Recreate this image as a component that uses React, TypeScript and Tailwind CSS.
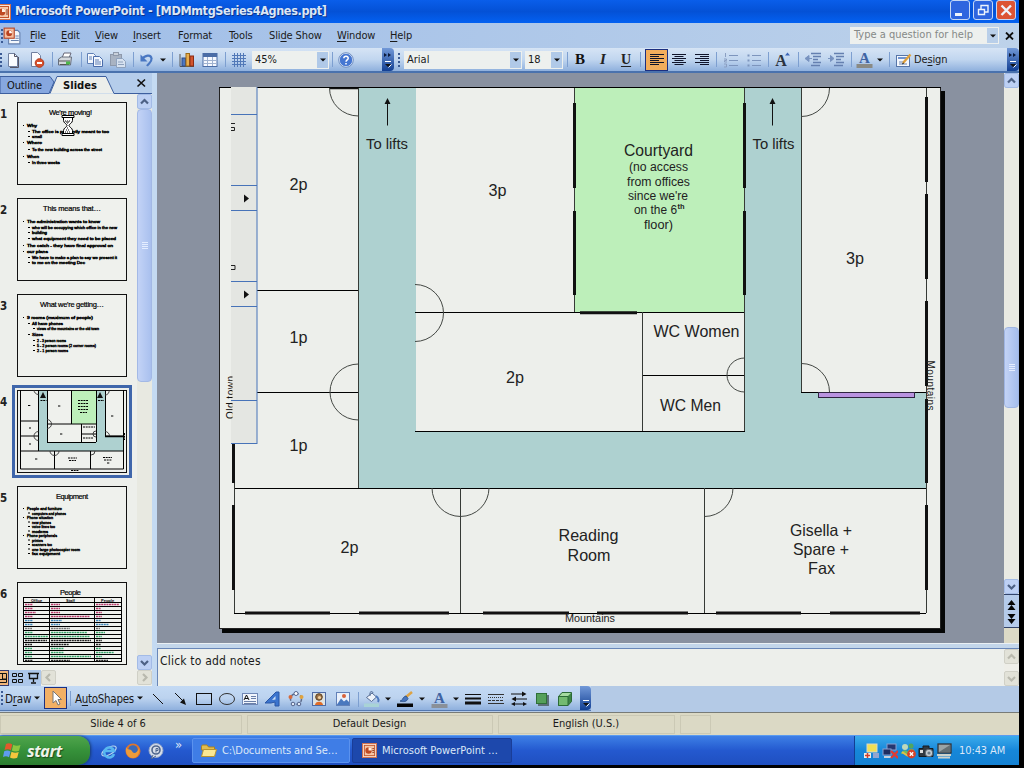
import React from "react";

type Kids = { children?: React.ReactNode };

function Cell({ w, children }: Kids & { w: string }) {
  return <div className={`flex h-full shrink-0 items-center justify-center ${w}`}>{children}</div>;
}

function Ico({ s = 16, children }: Kids & { s?: number }) {
  return (
    <svg width={s} height={s} viewBox="0 0 16 16" className="block shrink-0" fill="none">
      {children}
    </svg>
  );
}

function Sep({ w }: { w: string }) {
  return (
    <Cell w={w}>
      <div className="h-[15px] w-px bg-[#7d9fd0]" />
    </Cell>
  );
}

function Down({ c = "#111" }: { c?: string }) {
  return (
    <svg width="6" height="4" viewBox="0 0 6 4" className="block shrink-0">
      <path d="M0 0.5H6L3 3.5Z" fill={c} />
    </svg>
  );
}

function Grip() {
  return (
    <div className="flex flex-col gap-[2px]">
      {[0, 1, 2, 3].map((i) => (
        <div key={i} className="h-[2px] w-[2px] bg-[#3a5a94]" />
      ))}
    </div>
  );
}

function Overflow({ arrows = true }: { arrows?: boolean }) {
  return (
    <div className="flex h-full w-full flex-col items-center justify-between rounded-r-sm bg-linear-to-b from-[#7299d8] to-[#123f93] pt-[5px] pb-[3px]">
      <svg width="8" height="4" viewBox="0 0 8 4">
        {arrows && <path d="M0 0L3 2L0 4ZM4 0L7 2L4 4Z" fill="#0c1a3a" />}
      </svg>
      <svg width="8" height="7" viewBox="0 0 8 7">
        <path d="M1 0.5H7" stroke="#fff" />
        <path d="M1 3H7L4 6Z" fill="#111" />
        <path d="M4.5 6.5L7.5 3.5" stroke="#fff" />
      </svg>
    </div>
  );
}

function Combo({ w, text }: { w: string; text: string }) {
  return (
    <div className={`flex h-[18px] shrink-0 items-stretch bg-[#edf0ee] p-px ${w}`}>
      <span className="flex-1 pl-[2px] leading-[15px]">{text}</span>
      <span className="flex w-[11px] items-center justify-center bg-[#b0c9e8]">
        <Down />
      </span>
    </div>
  );
}

function Bars({ x }: { x: number[] }) {
  return (
    <Ico>
      {x.map((v, i) => (
        <path key={i} d={`M${v} ${2.5 + i * 2}h${i % 2 ? 9 : 14}`} stroke="#10142a" />
      ))}
    </Ico>
  );
}

function Chevron({ dir, off }: { dir: "up" | "down" | "left" | "right"; off?: boolean }) {
  const d = {
    up: "M4 9.5L7.5 6L11 9.5",
    down: "M4 6L7.5 9.5L11 6",
    left: "M9 4L5.5 7.5L9 11",
    right: "M6 4L9.5 7.5L6 11",
  }[dir];
  return (
    <svg width="15" height="15" viewBox="0 0 15 15" className="block shrink-0">
      <rect x="0.5" y="0.5" width="14" height="14" rx="1.5" fill={off ? "#e2e2d8" : "#bdd0f4"} stroke={off ? "#d0d0c6" : "#a3bbe6"} />
      <path d={d} stroke={off ? "#b9b9ae" : "#4d6185"} strokeWidth="2.2" fill="none" />
    </svg>
  );
}

function PptIcon({ s = 16 }: { s?: number }) {
  return (
    <Ico s={s}>
      <rect x="0.5" y="0.5" width="15" height="15" fill="#fbe3d2" stroke="#d4714a" />
      <rect x="2.5" y="2.5" width="11" height="11" fill="#f6c7a8" stroke="#c2542c" />
      <circle cx="7" cy="8" r="3.4" fill="#c04a22" />
      <path d="M7 8V4.6A3.4 3.4 0 0 1 10.4 8Z" fill="#fff0e0" />
      <path d="M11 6h2M11 8h2M11 10h2" stroke="#8c3b20" />
    </Ico>
  );
}

function MenuBar() {
  const items: [string, string, string, string][] = [
    ["w-[31px]", "", "F", "ile"],
    ["w-[34px]", "", "E", "dit"],
    ["w-[38px]", "", "V", "iew"],
    ["w-[45px]", "", "I", "nsert"],
    ["w-[51px]", "F", "o", "rmat"],
    ["w-[40px]", "", "T", "ools"],
    ["w-[68px]", "Sli", "d", "e Show"],
    ["w-[53px]", "", "W", "indow"],
    ["w-[40px]", "", "H", "elp"],
  ];
  return (
    <div className="flex h-[25px] shrink-0 items-center bg-linear-to-r from-[#9fbde8] to-[#bdd2ea]">
      <Cell w="w-[3px]"><Grip /></Cell>
      <div className="flex w-[27px]">
        <Ico s={18}>
          <path d="M5 3h8l2 2v10H5Z" fill="#f4f7fc" stroke="#6580ad" />
          <path d="M11 8h3M11 10h3M7 12h7" stroke="#6580ad" />
          <rect x="1" y="1" width="9" height="9" fill="#f5bd9d" stroke="#b7492a" />
          <circle cx="5.5" cy="5.5" r="2.6" fill="#b7401e" />
          <path d="M5.500 5.500V3A2.600 2.600 0 0 1 8 5.500Z" fill="#fff" />
        </Ico>
      </div>
      {items.map(([w, a, b, c]) => (
        <span key={b + c} className={`shrink-0 pt-px tracking-[-0.120px] ${w}`}>
          {a}<span className="underline underline-offset-2">{b}</span>{c}
        </span>
      ))}
      <div className="flex-1" />
      <div className="flex h-[17px] w-[149px] items-stretch bg-[#edf0ee] p-px">
        <span className="flex-1 pl-[3px] text-[11px] leading-[14px] whitespace-nowrap text-[#858987]">Type a question for help</span>
        <span className="flex w-[11px] items-center justify-center bg-[#b9cfe9]"><Down /></span>
      </div>
      <Cell w="w-[20px]">
        <svg width="9" height="8" viewBox="0 0 9 8"><path d="M1 0.500L8 7.500M8 0.500L1 7.500" stroke="#111" strokeWidth="1.800" /></svg>
      </Cell>
    </div>
  );
}

function FontA({ bar, s = 17 }: { bar: string; s?: number }) {
  return (
    <svg width={s} height="17" viewBox="0 0 17 17" className="block shrink-0">
      <text x="8.500" y="11.500" textAnchor="middle" fontFamily="Liberation Serif, serif" fontWeight="bold" fontSize="15" fill="#3f64a3">A</text>
      <rect x="0.500" y="13" width="16" height="4" fill={bar} />
    </svg>
  );
}

function Toolbar() {
  return (
    <div className="flex h-[25px] shrink-0 items-center border-b-2 border-[#4a72ad] bg-linear-to-b from-[#d6e4f5] via-[#c1d6ef] to-[#8fb0dd]">
      <Cell w="w-[2px]"><Grip /></Cell>
      <Cell w="w-[22px]"><Ico><path d="M3.500 1.500h6l3 3v10h-9Z" fill="#fafcff" stroke="#7080a0" /><path d="M9.500 1.500v3h3M5 15.500h8.500V5" stroke="#556" /></Ico></Cell>
      <Cell w="w-[26px]"><Ico><path d="M2.500 0.500h6l3 3v11h-9Z" fill="#fafcff" stroke="#7080a0" /><circle cx="10.500" cy="11" r="4.300" fill="#d8502c" stroke="#b23a1c" /><path d="M8 11h5" stroke="#fff" strokeWidth="2" /></Ico></Cell>
      <Sep w="w-[4px]" />
      <Cell w="w-[22px]"><Ico><path d="M5 6L7 1h7l-2 5" fill="#fff" stroke="#667" /><path d="M1.500 7l3-2h10l-1 8h-12Z" fill="#d5d9dd" stroke="#666e7c" /><path d="M2 9h11M3 12.500h9" stroke="#555" /><rect x="9" y="9.500" width="4" height="3" fill="#4cb848" /></Ico></Cell>
      <Sep w="w-[10px]" />
      <Cell w="w-[18px]"><Ico><path d="M0.500 1.500h6l2 2v8h-8Z" fill="#f4f8fe" stroke="#5f7fb5" /><path d="M6.500 4.500h6l3 3v7h-9Z" fill="#f4f8fe" stroke="#4a6cab" /><path d="M2 5h3M2 7h3M8 8h4M8 10h6M8 12h6" stroke="#5f7fb5" /></Ico></Cell>
      <Cell w="w-[28px]"><Ico><rect x="0.500" y="2.500" width="11" height="11" fill="#a9b3c2" stroke="#8e99ab" /><rect x="3.500" y="0.500" width="5" height="3" fill="#c9d0da" stroke="#8e99ab" /><path d="M6.500 6.500h6l3 3v6h-9Z" fill="#d7e2f0" stroke="#8fa2bd" /><path d="M8 10h5M8 12.500h6" stroke="#8fa2bd" /></Ico></Cell>
      <Sep w="w-[2px]" />
      <Cell w="w-[26px]"><Ico><path d="M3 7C6 3 12 2 12.500 6.500C13 10 10 11 8 14" stroke="#4977c2" strokeWidth="2.200" /><path d="M1.500 2.500V9.500H8.500Z" fill="#4977c2" /></Ico></Cell>
      <Cell w="w-[6px]"><Down /></Cell>
      <Sep w="w-[12px]" />
      <Cell w="w-[18px]"><Ico><path d="M1 2v12.500h14" stroke="#555" /><rect x="3" y="6" width="3.500" height="8" fill="#4c76c0" stroke="#2c4c88" /><rect x="7" y="1.500" width="3.500" height="12.500" fill="#e8ae4e" stroke="#9b6a18" /><rect x="11" y="4" width="3.500" height="10" fill="#d2552f" stroke="#8c2c14" /></Ico></Cell>
      <Cell w="w-[28px]"><Ico><rect x="1" y="1.500" width="14" height="13" fill="#f6f9ff" stroke="#4b6da6" /><rect x="1" y="1.500" width="14" height="3.500" fill="#4b6da6" /><path d="M1 8.500h14M1 11.500h14M5.500 5v9M10.500 5v9" stroke="#9fb2d0" /></Ico></Cell>
      <Sep w="w-[2px]" />
      <Cell w="w-[26px]"><Ico><path d="M1 3.500h14M1 6.500h14M1 9.500h14M1 12.500h14M3.500 1v14M6.500 1v14M9.500 1v14M12.500 1v14" stroke="#5279b8" /></Ico></Cell>
      <Combo w="w-[77px]" text="45%" />
      <Sep w="w-[6px]" />
      <Cell w="w-[22px]"><Ico><circle cx="8" cy="8" r="6.700" fill="#4677d2" stroke="#dce8fa" /><circle cx="8" cy="8" r="7.300" stroke="#7391c2" /><path d="M5.800 6.200C6 3.500 10.500 3.800 10.200 6.300C10 7.800 8 8 8 9.800M8 11v1.600" stroke="#fff" strokeWidth="1.500" /></Ico></Cell>
      <div className="w-[25px]" />
      <Cell w="w-[12px]"><Overflow /></Cell>
      <Cell w="w-[10px]"><Grip /></Cell>
      <Combo w="w-[118px]" text="Arial" />
      <div className="w-[3px]" />
      <Combo w="w-[38px]" text="18" />
      <Sep w="w-[8px]" />
      <Cell w="w-[18px]"><b className="font-['Liberation_Serif',serif] text-[15px] text-[#111]">B</b></Cell>
      <Cell w="w-[28px]"><b className="font-['Liberation_Serif',serif] text-[15px] text-[#222] italic">I</b></Cell>
      <Cell w="w-[18px]"><b className="font-['Liberation_Serif',serif] text-[14px] text-[#222] underline underline-offset-2">U</b></Cell>
      <Sep w="w-[10px]" />
      <div className="flex h-[22px] w-[23px] shrink-0 items-center justify-center border border-[#1c2f80] bg-[#f2ad5c]"><Bars x={[1, 1, 1, 1, 1, 1]} /></div>
      <Cell w="w-[22px]"><Bars x={[1, 3.5, 1, 3.5, 1, 3.5]} /></Cell>
      <Cell w="w-[24px]"><Bars x={[1, 6, 1, 6, 1, 6]} /></Cell>
      <Sep w="w-[4px]" />
      <Cell w="w-[26px]"><Ico><path d="M6 3.500h9M6 8.500h9M6 13.500h9" stroke="#7d95bd" /><path d="M2.500 1v4M1 7h2.500v1.500H1.500V10H4M1 12h2.500v3H1" stroke="#8b9fc2" /></Ico></Cell>
      <Cell w="w-[20px]"><Ico><path d="M6 3.500h9M6 8.500h9M6 13.500h9" stroke="#7d95bd" /><path d="M1.500 3.500h2M1.500 8.500h2M1.500 13.500h2" stroke="#7d95bd" strokeWidth="2" /></Ico></Cell>
      <Sep w="w-[8px]" />
      <Cell w="w-[20px]"><svg width="17" height="17" viewBox="0 0 17 17"><text x="7" y="15" textAnchor="middle" fontFamily="Liberation Serif, serif" fontWeight="bold" fontSize="16" fill="#2b3340">A</text><path d="M11 4.500L13.500 1.500L16 4.500Z" fill="#3c66b8" /></svg></Cell>
      <Sep w="w-[12px]" />
      <Cell w="w-[18px]"><Ico><path d="M6 1.500h10M8 4.500h8M8 7.500h5M8 10.500h8M6 13.500h9" stroke="#6580b0" strokeWidth="1.300" /><path d="M0 6.500L4 3.500V9.500ZM4 6.500h3" fill="#7893c0" stroke="#7893c0" /></Ico></Cell>
      <Cell w="w-[28px]"><Ico><path d="M6 1.500h10M8 4.500h8M8 7.500h5M8 10.500h8M6 13.500h9" stroke="#6580b0" strokeWidth="1.300" /><path d="M6 6.500L2.500 3.500V9.500ZM0 6.500h3" fill="#7893c0" stroke="#7893c0" /></Ico></Cell>
      <Sep w="w-[2px]" />
      <Cell w="w-[24px]"><FontA bar="#8a8a84" /></Cell>
      <Cell w="w-[8px]"><Down /></Cell>
      <Sep w="w-[10px]" />
      <Cell w="w-[20px]"><Ico><rect x="0.500" y="3.500" width="13" height="11" fill="#f5f8fd" stroke="#5675a8" /><rect x="2" y="5" width="9" height="2" fill="#6f93d0" /><path d="M3 10h5M3 12h8" stroke="#6b85b0" /><path d="M7 11L14.500 2.500" stroke="#dfa03a" strokeWidth="2.400" /><path d="M6 12l2-1" stroke="#333" /></Ico></Cell>
      <span className="pt-px text-[11px] tracking-[-0.150px]">De<span className="underline underline-offset-2">s</span>ign</span>
      <div className="flex-1" />
      <Cell w="w-[12px]"><Overflow /></Cell>
    </div>
  );
}

type Line = [number, number, number, string];

function SlideText({ title, tx, tw, lines }: { title: string; tx: number; tw: number; lines: Line[] }) {
  return (
    <g fontFamily="Liberation Sans, Arial, sans-serif" fill="#000">
      <text x={tx} y="13" fontSize="7.500" textLength={tw} stroke="#000" strokeWidth="0.200">{title}</text>
      {lines.map(([x, y, w, t], i) => (
        <g key={i}>
          <rect x={x - 4} y={y - 2} width={x < 12 ? 1 : 2} height="1" />
          <text x={x} y={y} fontSize="4.200" stroke="#000" strokeWidth="0.450" textLength={w} lengthAdjust="spacingAndGlyphs">{t}</text>
        </g>
      ))}
    </g>
  );
}

function PeopleTable() {
  const c = ["#b93a6c", "#b93a6c", "#b93a6c", "#b93a6c", "#3e86b8", "#3e86b8", "#777", "#35a56a", "#35a56a", "#222", "#222", "#35a56a", "#35a56a", "#35a56a", "#222"];
  const w = [[8, 9, 23], [8, 9, 5], [11, 9, 6], [8, 39, 6], [8, 11, 5], [8, 9, 13], [7, 19, 4], [8, 36, 9], [23, 39, 6], [22, 40, 6], [7, 18, 5], [7, 13, 5], [7, 13, 18], [7, 40, 6], [8, 19, 12]];
  return (
    <g>
      <text x="43" y="13" fontSize="7.500" textLength="21" fontFamily="Liberation Sans, sans-serif" stroke="#000" strokeWidth="0.200">People</text>
      <g fontFamily="Liberation Sans, sans-serif" fontSize="4" fontWeight="bold">
        <text x="14" y="19.500">Office</text><text x="49" y="19.500">Staff</text><text x="84" y="19.500">People</text>
      </g>
      <rect x="6.500" y="15.500" width="98" height="64" fill="none" stroke="#000" />
      <path d="M32.500 15v65M77.500 15v65" stroke="#000" />
      {c.map((k, i) => (
        <g key={i}>
          <path d={`M6 ${20.5 + i * 4}h98`} stroke="#000" />
          <path d={`M8 ${22.6 + i * 4}h${w[i][0]}M34 ${22.6 + i * 4}h${w[i][1]}M79 ${22.6 + i * 4}h${w[i][2]}`} stroke={k} strokeWidth="1.500" strokeDasharray="2 0.6" />
        </g>
      ))}
    </g>
  );
}

function MiniPlan() {
  return (
    <g stroke="#000" fill="none">
      <path d="M21.500 1H30v52h49V1h9v45h18v15H21.500Z" fill="#aed1d0" stroke="none" />
      <rect x="54" y="1" width="26" height="33" fill="#bdefba" stroke="none" />
      <path d="M3.500 0v79h103V0M3 31h18M3 46h18M3 61h103M21.500 0v61M37.500 61v18M73.500 61v18M30 34h49M30 52.500h49M30.500 0v52M54.500 0v34M79.500 0v52M64.500 34v18M64 44h15M88.500 0v46h18" />
      <path d="M88 46.500h18" strokeWidth="1.500" />
      <path d="M17 0a4.500 4.500 0 0 0 4.500 4.500M21.500 41.500a4.500 4.500 0 0 0 0 9M30 29.500a4.500 4.500 0 0 1 0 9M33 61a4.500 4.500 0 0 0 9 0M88 41.500a4.500 4.500 0 0 1 4.500 4.500M92 0a4 4 0 0 1-4 5M79 41a3 3 0 0 0 0 6M78 61a4 4 0 0 1-4 4" stroke="#333" strokeWidth="0.900" />
      <path d="M26 2L29 8H23ZM83 2L86 8H80Z" fill="#111" stroke="none" />
      <path d="M23.500 10.500h6M81 10.500h6M11 15.500h3M41 16h3M12 38h2M12 54h2M18 69h3M43 44h3M94 26h3M61 10.500h10M61 13.500h10M61 16.500h10M61 19.500h10M63 22.500h7M66 37h12M66 48h10M51 68h9M52 70.500h7M86 67.500h9M87 70h8M90 73h3M54 80.500h8M107.500 43v7" strokeDasharray="2 0.700" />
    </g>
  );
}

const thumbs: React.ReactNode[] = [
  <SlideText title="We're moving!" tx={32} tw={43} lines={[[10, 25, 10, "Why"], [15, 31, 77, "The office is presently meant to too"], [15, 36, 10, "small"], [10, 42, 15, "Where"], [15, 49, 70, "To the new building across the street"], [10, 56, 12, "When"], [15, 62, 28, "In three weeks"]]} />,
  <SlideText title="This means that…" tx={26} tw={58} lines={[[10, 25, 73, "The administration wants to know"], [15, 31, 85, "who will be occupying which office in the new"], [15, 36, 15, "building"], [15, 42, 84, "what equipment they need to be placed"], [10, 49, 86, "The catch - they have final approval on"], [10, 55, 21, "our plans"], [15, 61, 85, "We have to make a plan to say we present it"], [15, 66, 53, "to me on the meeting Dec"]]} />,
  <SlideText title="What we're getting…" tx={23} tw={64} lines={[[10, 25, 66, "9 rooms (maximum of people)"], [15, 31, 31, "All have phones"], [20, 36, 62, "views of the mountains or the old town"], [15, 42, 11, "Sizes"], [20, 48, 29, "2 - 3 person rooms"], [20, 53, 59, "5 - 2 person rooms (2 corner rooms)"], [20, 58, 31, "2 - 1 person rooms"]]} />,
  <MiniPlan />,
  <SlideText title="Equipment" tx={39} tw={32} lines={[[10, 24, 35, "People and furniture"], [15, 28.500, 34, "computers and phones"], [10, 33, 26, "Phone situation"], [15, 37.500, 19, "new phones"], [15, 42, 23, "voice lines too"], [15, 46.500, 16, "modems"], [10, 51, 30, "Phone peripherals"], [15, 55.500, 11, "printers"], [15, 60, 20, "scanners too"], [15, 64.500, 48, "one large photocopier room"], [15, 69, 28, "fax equipment"]]} />,
  <PeopleTable />,
];

function SidePane() {
  return (
    <div className="relative flex w-[157px] shrink-0 flex-col bg-[#edefeb]">
      <div className="flex h-[21px] shrink-0 bg-[#b5cdeb]">
        <svg width="157" height="21" viewBox="0 0 157 21" className="block">
          <path d="M0 20.500V3.500H50L54 9L49 20.500Z" fill="#86a7df" stroke="#3d5f9f" />
          <path d="M50 20.500L57 3.500H106L114 20.500" fill="#edefeb" stroke="#3d5f9f" />
          <path d="M114 20.500H152" stroke="#3d5f9f" />
          <text x="7" y="16" fontFamily="DejaVu Sans Condensed, DejaVu Sans, sans-serif" fontSize="11" textLength="35" fill="#111">Outline</text>
          <text x="63" y="16" fontFamily="DejaVu Sans Condensed, DejaVu Sans, sans-serif" fontSize="11" fontWeight="bold" textLength="34" lengthAdjust="spacingAndGlyphs" fill="#111">Slides</text>
          <path d="M137.500 6.500L145 13.500M145 6.500L137.500 13.500" stroke="#111" strokeWidth="1.600" />
          <rect x="152" y="0" width="5" height="21" fill="#c4daf2" />
        </svg>
      </div>
      <div className="flex h-[576px] shrink-0">
        <div className="flex w-[137px] flex-col gap-[13px] pt-[8px]">
          {thumbs.map((t, i) => (
            <div key={i} className="flex h-[83px] shrink-0">
              <span className="w-[17px] pt-[6px] text-[11.500px] leading-[13px] font-semibold text-[#222]">{i + 1}</span>
              <div className={i === 3 ? "h-[83px] w-[110px] outline-3 outline-offset-2 outline-[#3f66ab]" : "h-[83px] w-[110px]"}>
                <svg width="110" height="83" viewBox="0 0 110 83" className="block">
                  <rect x="0.500" y="0.500" width="109" height="82" fill="#eff1ed" stroke="#111" />
                  {t}
                </svg>
              </div>
            </div>
          ))}
        </div>
        <div className="flex w-[15px] flex-col bg-[#e8e9e1]">
          <Chevron dir="up" />
          <div className="flex h-[273px] flex-col items-center justify-center gap-px rounded-sm border border-[#a3b9e6] bg-linear-to-r from-[#c3d3f6] to-[#a9c0ee]">
            {[0, 1, 2, 3].map((i) => <div key={i} className="h-px w-[6px] bg-[#e4edff]" />)}
          </div>
          <div className="flex-1" />
          <Chevron dir="down" />
        </div>
        <div className="w-[5px] bg-[#c4daf2]" />
      </div>
      <div className="flex h-[16px] shrink-0">
        <div className="flex w-[41px] bg-[#adc7ea]">
          <svg width="41" height="16" viewBox="0 0 41 16" fill="none" stroke="#111">
            <rect x="-2" y="0.500" width="10.500" height="15" fill="#f0b478" stroke="#33386e" />
            <path d="M0 3.500h6.500v9H0M2.500 4v5H6M0 9.500h6" />
            <path d="M12.500 3.500h4v3h-4ZM18.500 3.500h4v3h-4ZM12.500 9.500h4v3h-4ZM18.500 9.500h4v3h-4Z" />
            <path d="M28 3.500h11M29.500 4v4.500h8V4M33.500 9v3M31 13h5" strokeWidth="1.300" />
          </svg>
        </div>
        <Chevron dir="left" off />
        <div className="flex-1 bg-[#eeeee8]" />
        <Chevron dir="right" off />
        <div className="w-[5px] bg-[#c4daf2]" />
      </div>
      <div className="absolute top-[41px] left-[61px]">
        <svg width="14" height="23" viewBox="0 0 14 23" className="block">
          <path d="M2.500 3.500v3C2.500 9 6 10 6 11.500C6 13 2.500 14 2.500 16.500v3h9v-3C11.500 14 8 13 8 11.500C8 10 11.500 9 11.500 6.500v-3Z" fill="#fff" stroke="#000" />
          <path d="M1 1.500h12v2H1ZM1 19.500h12v2H1Z" fill="#fff" stroke="#000" />
          <path d="M4 7h1M6 7h1M8 7h1M5 8h1M7 8h1M6 9h1M6 14h1M5 16h1M7 16h1M4 18h1M6 18h1M8 18h1" stroke="#000" strokeWidth="1.200" />
        </svg>
      </div>
    </div>
  );
}

function FloorPlan() {
  const t = (x: number, y: number, w: number, s: string, f = 16.5) => (
    <text x={x} y={y} fontSize={f} textLength={w} lengthAdjust="spacingAndGlyphs">{s}</text>
  );
  return (
    <svg width="847" height="570" viewBox="157 73 847 570" className="block shrink-0 bg-[#8991a0]">
      <rect x="222" y="91" width="723" height="542" fill="#050606" />
      <rect x="219.500" y="87.500" width="721" height="541" fill="#edefeb" stroke="#222" />
      <path d="M359 88H416V431H745V88H801V392H926V488H359Z" fill="#aed1d0" />
      <rect x="575" y="88" width="170" height="224" fill="#bdefba" />
      <g stroke="#111" fill="none">
        <path d="M219 87.500H941M257 290.500H358M257 392.500H358M234 488.500H926M234 613.500H926M415 312.500H745M642 375.500H745M415 431.500H745M801 392.500H927" stroke="#000" />
        <path d="M358.500 88V488M234.500 443V613M460.500 488V613M704.500 488V613M642.500 312V431M574.500 88V312M744.500 88V431M801.500 88V392M926.500 88V613" stroke="#363a36" />
        <path d="M574.500 103V188M574.500 211V295M744.500 103V188M744.500 211V295M580 312.800H637M926.500 97V182M926.500 194V279M926.500 301V386M926.500 399V483M926.500 505V590M233.500 443V483M233.500 505V590M245 613H330M359 613H449M483 613H569M597 613H688M716 613H801M830 613H920" strokeWidth="3" />
        <path d="M330 88.500H358" strokeWidth="1.500" />
        <path d="M329.500 88A29 28 0 0 0 358.500 116M358.500 364A28.500 28 0 0 0 358.500 420M415 284.500A28.500 28.500 0 0 1 415 341.500M432 488A28.500 28.500 0 0 0 489 488M733 488A28.500 28.500 0 0 1 704.500 516.500M829.500 88A28 28.500 0 0 1 801.500 116.500M801.500 363.500A28 28.500 0 0 1 829.500 392M744.500 358A17.500 17 0 0 0 744.500 392" stroke="#444844" />
        <rect x="818.500" y="392.500" width="96" height="5" fill="#b993e0" stroke="#2e2440" />
        <path d="M387.500 103V125.500M772.500 103V125.500" />
        <path d="M387.500 98L390.500 104H384.500ZM772.500 98L775.500 104H769.500Z" fill="#111" stroke="none" />
      </g>
      <g fontFamily="Liberation Sans, Arial, sans-serif" fill="#222">
        {t(289.500, 190, 18, "2p")}
        {t(289.500, 343, 18, "1p")}
        {t(289.500, 451, 18, "1p")}
        {t(488.500, 196, 18, "3p")}
        {t(506, 383, 18, "2p")}
        {t(340.500, 553, 18, "2p")}
        {t(846, 264, 18, "3p")}
        {t(366, 149, 42, "To lifts", 14)}
        {t(752.500, 149, 42, "To lifts", 14)}
        {t(624, 156, 69, "Courtyard")}
        {t(629, 171, 59, "(no access", 12)}
        {t(627, 186, 63, "from offices", 12)}
        {t(628, 200, 60, "since we're", 12)}
        {t(634, 214, 43, "on the 6", 12)}
        <text x="677.500" y="209" fontSize="7.500" fontWeight="bold" textLength="7">th</text>
        {t(644, 229, 29, "floor)", 12)}
        {t(653.500, 337, 86, "WC Women")}
        {t(660, 411, 61, "WC Men")}
        {t(558.500, 541, 60, "Reading")}
        {t(567.500, 561, 43, "Room")}
        {t(790, 536, 62, "Gisella +")}
        {t(793, 555, 56, "Spare +")}
        {t(808, 574, 27, "Fax")}
        {t(565, 622, 50, "Mountains", 10)}
        <text transform="translate(926.500 360.500) rotate(90)" fontSize="10" textLength="50">Mountains</text>
      </g>
      <rect x="231" y="87" width="26" height="356" fill="#e4e6e2" />
      <path d="M231 114.500h26M231 185.500h26M231 210.500h26M231 281.500h26M231 306.500h26M231 400.500h26M231 443.500h26.500M257 87V443" stroke="#4773b8" fill="none" />
      <path d="M244 194.500L249 198.500L244 202.500ZM244 290.500L249 294.500L244 298.500Z" fill="#111" />
      <path d="M231 123.500h4M231 127.500h3.500v3H231M231 265.500h4v4h-4" stroke="#222" fill="none" />
      <clipPath id="edge"><rect x="220" y="370" width="12.500" height="60" /></clipPath>
      <g clipPath="url(#edge)">
        <text transform="translate(234 419) rotate(-90)" fontFamily="Liberation Sans, sans-serif" fontSize="10" textLength="43" fill="#111">Old town</text>
      </g>
    </svg>
  );
}

function SlideScroll() {
  return (
    <div className="flex w-[15px] flex-col bg-[#e9eae3]">
      <Chevron dir="up" />
      <div className="h-[239px]" />
      <div className="flex h-[81px] flex-col items-center justify-center gap-px rounded-sm border border-[#9fb5e2] bg-linear-to-r from-[#c3d3f6] to-[#a5bdec]">
        {[0, 1, 2, 3].map((i) => <div key={i} className="h-px w-[6px] bg-[#e4edff]" />)}
      </div>
      <div className="flex-1" />
      <Chevron dir="down" />
      <div className="flex h-[34px] flex-col border-y border-[#33446a] bg-[#b5cbea]">
        <svg width="15" height="32" viewBox="0 0 15 32">
          <path d="M3.500 10L7.500 5L11.500 10ZM3.500 15L7.500 10L11.500 15ZM3.500 19H11.500L7.500 24ZM3.500 24H11.500L7.500 29Z" fill="#050505" />
        </svg>
      </div>
      <div className="h-[15px] bg-[#dcdac6]" />
    </div>
  );
}

function DrawBar() {
  return (
    <div className="flex h-[26px] shrink-0 bg-[#b4cae6] pb-px text-[11.500px]">
      <div className="flex h-[25px] w-[591px] items-center border-b border-[#5378b0] bg-linear-to-b from-[#c4daf4] via-[#bcd3ef] to-[#8fb0dd]">
        <Cell w="w-[4px]"><Grip /></Cell>
        <span className="w-[29px] pt-[3px] pl-px tracking-[-0.200px]">D<span className="underline underline-offset-2">r</span>aw</span>
        <Cell w="w-[7px]"><Down /></Cell>
        <div className="w-[4px]" />
        <div className="flex h-[22px] w-[23px] items-center justify-center border border-[#1c2f80] bg-[#f2b065]">
          <Ico><path d="M5 1V13L8 10.500L10 15L12 14L10 9.500H13.500Z" fill="#fff" stroke="#777" /></Ico>
        </div>
        <Sep w="w-[6px]" />
        <span className="w-[63px] pt-[3px] pl-[2px] tracking-[-0.300px]">A<span className="underline underline-offset-2">u</span>toShapes</span>
        <Cell w="w-[8px]"><Down /></Cell>
        <div className="flex h-full flex-1 items-center pt-[2px]">
          <Cell w="w-[28px]"><Ico><path d="M3 3L13 13" stroke="#111" /></Ico></Cell>
          <Cell w="w-[18px]"><Ico><path d="M2 2L10 10" stroke="#111" /><path d="M13 14L7 11.500L11 7.500Z" fill="#111" /></Ico></Cell>
          <Cell w="w-[28px]"><Ico><rect x="0.500" y="2.500" width="15" height="11" stroke="#111" /></Ico></Cell>
          <Cell w="w-[18px]"><Ico><ellipse cx="8" cy="8" rx="7.500" ry="5.500" stroke="#333" /></Ico></Cell>
          <Cell w="w-[28px]"><Ico><rect x="0.500" y="2.500" width="15" height="11" fill="#f1f5fc" stroke="#7088b5" /><path d="M2 9L4.500 4L7 9M3 7.500h3" stroke="#111" /><path d="M9 5.500h5M9 7.500h5M2 10.500h12M2 12.500h12" stroke="#6a7fa8" /></Ico></Cell>
          <Cell w="w-[18px]"><Ico><path d="M0 12L11 1L14 1V15H10V11L6 12Z" fill="#3b74ce" stroke="#2a56a5" /><path d="M7 9L10.500 5V8.500Z" fill="#cde0f8" /></Ico></Cell>
          <Cell w="w-[27px]"><Ico><circle cx="8" cy="8" r="5.500" stroke="#5d6c8c" strokeDasharray="3 2" strokeWidth="1.500" /><circle cx="8" cy="2.500" r="2" fill="#fff" stroke="#55648c" /><circle cx="2.500" cy="6" r="2" fill="#d66a3c" /><circle cx="13.500" cy="6" r="2" fill="#e0a33d" /><circle cx="5" cy="13" r="1.800" fill="#dfe8f5" stroke="#55648c" /><circle cx="11" cy="13" r="1.800" fill="#dfe8f5" stroke="#55648c" /></Ico></Cell>
          <Cell w="w-[20px]"><Ico><rect x="1.500" y="1.500" width="13" height="13" fill="#dfe3e2" stroke="#4d6ba5" /><circle cx="8" cy="6" r="3.300" fill="#9a7146" stroke="#5b4020" /><path d="M4 14C4 9.500 12 9.500 12 14Z" fill="#e06b26" /><circle cx="8.500" cy="6.500" r="1.600" fill="#f3cf9a" /></Ico></Cell>
          <Cell w="w-[28px]"><Ico><rect x="1.500" y="1.500" width="13" height="13" fill="#eaf1fb" stroke="#6281b8" /><path d="M2 13.500L6 7.500L9 10.500L11.500 8.500L14 11V14H2Z" fill="#4a78be" /><circle cx="9" cy="5" r="2" fill="#d9633a" /></Ico></Cell>
          <Sep w="w-[2px]" />
          <Cell w="w-[26px]"><Ico><path d="M2.500 6.500L8 2L12.500 6L7.500 10.500Z" fill="#eef3fa" stroke="#556c94" /><path d="M6 5V1.500C7 0 9 0.500 9 2" stroke="#556c94" /><path d="M12 5C15 7 15 9 14 11" stroke="#4d78bd" strokeWidth="2" /><rect x="0" y="12.500" width="15" height="3.500" fill="#a9d3d6" /></Ico></Cell>
          <Cell w="w-[6px]"><Down /></Cell>
          <Cell w="w-[28px]"><Ico><path d="M15 1L9 6" stroke="#dda344" strokeWidth="2.500" /><path d="M3 10C6 10 5 6 9 5L11 7.500C10 11 6 11 3 10Z" fill="#4674bd" stroke="#32588f" /><rect x="0" y="12.500" width="16" height="3.500" fill="#050505" /></Ico></Cell>
          <Cell w="w-[6px]"><Down /></Cell>
          <Cell w="w-[28px]"><FontA bar="#8a9098" /></Cell>
          <Cell w="w-[6px]"><Down /></Cell>
          <Cell w="w-[28px]"><Ico><path d="M0 3.500h16" stroke="#111" /><path d="M0 7.500h16" stroke="#111" strokeWidth="2" /><path d="M0 12h16" stroke="#111" strokeWidth="3" /></Ico></Cell>
          <Cell w="w-[18px]"><Ico><path d="M0 3.500h16M0 12.500h16" stroke="#333" /><path d="M0 6.500h16" stroke="#333" strokeDasharray="1 1" /><path d="M0 9.500h16" stroke="#333" strokeDasharray="3 1" /></Ico></Cell>
          <Cell w="w-[28px]"><Ico><path d="M0 3h14M2 8h14M2 13h12" stroke="#111" strokeWidth="1.200" /><path d="M11 0.500L15.500 3L11 5.500M5 5.500L0.500 8L5 10.500M4 11L0 13L4 15M12 11L16 13L12 15" fill="#111" /></Ico></Cell>
          <Cell w="w-[18px]"><Ico><rect x="4" y="4" width="11" height="11" fill="#5b6f79" /><rect x="2.500" y="2.500" width="10" height="10" fill="#55a05a" stroke="#2f7038" /></Ico></Cell>
          <Cell w="w-[28px]"><Ico><path d="M1.500 5.500L5 1.500H14.500V10.500L11 14.500H1.500Z" fill="#3d8545" stroke="#2b6a36" /><path d="M1.500 5.500H11V14.500H1.500Z" fill="#73ba70" stroke="#2b6a36" /><path d="M2.500 5L5.300 2H14L11 5Z" fill="#a5dba0" /></Ico></Cell>
        </div>
        <Cell w="w-[11px]"><Overflow arrows={false} /></Cell>
      </div>
    </div>
  );
}

function Status({ w, text, pad }: { w: string; text: string; pad: string }) {
  return (
    <div className={`flex h-[19px] shrink-0 items-center justify-center border border-[#cbc9b5] pt-px ${w} ${pad}`}>
      <span className="whitespace-nowrap">{text}</span>
    </div>
  );
}

function TaskBar() {
  return (
    <div className="flex h-[30px] shrink-0 items-center border-t border-[#5a9bf0] bg-linear-to-b from-[#3e7fe6] via-[#2459cf] to-[#1f4fc0] text-[#dce8f8]">
      <div className="flex h-full w-[90px] shrink-0 items-center gap-[5px] rounded-r-xl bg-linear-to-b from-[#4fa54c] via-[#36913a] to-[#2b7c2f] pl-[3px] shadow-[1px_0_3px_#173a6e]">
        <svg width="19" height="18" viewBox="0 0 19 18" className="shrink-0">
          <path d="M3 2C5 1 7 1 9.300 2.400L7.800 8.200C6 7 4 7 1.500 8Z" fill="#e2592c" />
          <path d="M10.300 2.800C12 4 15 4 17.500 3L16 8.800C13.500 10 11 9.500 8.800 8.500Z" fill="#8cc63f" />
          <path d="M1.200 9.200C3.500 8 5.500 8.200 7.500 9.400L6 15.200C4 14 2 14 0 15Z" fill="#5f9cf0" />
          <path d="M8.500 9.800C11 11 13.500 11 15.700 10L14.200 15.800C12 17 9 16.800 7 15.600Z" fill="#f4c63d" />
        </svg>
        <span className="font-['Noto_Sans','Open_Sans',sans-serif] text-[16px] leading-none font-bold tracking-[-0.400px] text-[#eef3e8] italic [font-stretch:normal] [text-shadow:1px_1px_1px_#1a4d1c]">start</span>
      </div>
      <div className="w-[11px]" />
      <Cell w="w-[16px]"><Ico><ellipse cx="8" cy="8" rx="8" ry="3.500" transform="rotate(-30 8 8)" stroke="#b8d6ee" strokeWidth="1.200" /><path d="M13 11A5 5 0 1 1 13 8H4.500" stroke="#58b7f0" strokeWidth="2.600" /></Ico></Cell>
      <Cell w="w-[32px]"><Ico><circle cx="8" cy="8" r="7.500" fill="#e0762b" /><circle cx="8" cy="7" r="4.800" fill="#3a69b8" /><path d="M1 4C3 8 5 5 7 8C8 11 12 11 14 5C15.500 10 12 15 8 15C3 15 0 10 1 4Z" fill="#ef9b3a" /></Ico></Cell>
      <Cell w="w-[14px]"><Ico><circle cx="8" cy="7.500" r="7" fill="#d7dee9" stroke="#92a5c8" /><circle cx="8" cy="7" r="4" stroke="#4f668e" strokeWidth="1.600" /><path d="M8 5.500v4M8 5.500h2v2H8M5 12L3 16L8 13" stroke="#4f668e" fill="#d7dee9" /></Ico></Cell>
      <span className="w-[29px] pb-3 pl-[12px] text-[13px] leading-none">»</span>
      <div className="flex h-[25px] w-[158px] shrink-0 items-center gap-[5px] rounded-[2px] border border-[#5b92ee] bg-[#3f7de6] pl-[8px]">
        <Ico><path d="M0.500 3.500C0.500 2.500 1 2 2 2H6L7.500 4H13.500V7H0.500Z" fill="#e3bd4e" stroke="#a98223" /><path d="M0.500 13.500L2.500 6.500H15.500L13.500 13.500Z" fill="#fae794" stroke="#b8932f" /></Ico>
        <span className="pt-px tracking-[-0.080px] whitespace-nowrap">C:\Documents and Se…</span>
      </div>
      <div className="w-[2px]" />
      <div className="flex h-[25px] w-[160px] shrink-0 items-center gap-[5px] rounded-[2px] border border-[#1a3d98] bg-[#1d48ac] pl-[9px]">
        <PptIcon s={15} />
        <span className="pt-[2px] tracking-[0.020px] whitespace-nowrap">Microsoft PowerPoint …</span>
      </div>
      <div className="flex-1" />
      <div className="flex h-full w-[165px] shrink-0 items-center border-l border-[#123f93] bg-linear-to-b from-[#3aabec] via-[#1687d9] to-[#1481d2] pl-[8px]">
        <Cell w="w-[18px]"><Ico><rect x="3" y="1" width="10" height="8" fill="#f0df55" stroke="#d8d8c8" /><rect x="0" y="10" width="7" height="5" fill="#f3eee5" /><path d="M1 12.500h5M3.500 10v5" stroke="#d13e29" strokeWidth="1.500" /><rect x="9" y="10" width="6" height="5" fill="#93a5cf" /></Ico></Cell>
        <Cell w="w-[18px]"><Ico><rect x="5" y="1" width="9" height="6" fill="#253770" stroke="#8ba0cf" /><rect x="1" y="6" width="8" height="6" fill="#1e2d60" stroke="#8ba0cf" /><path d="M2 14h7" stroke="#c8d0dd" strokeWidth="2" /><path d="M9 8L16 15M16 8L9 15" stroke="#df3c34" strokeWidth="2.400" /></Ico></Cell>
        <Cell w="w-[18px]"><Ico><circle cx="5" cy="4" r="3" fill="#bdd8bc" /><circle cx="11" cy="3" r="2.500" fill="#51a55f" /><path d="M1 11C2 6 8 6 9 11ZM8 8C10 5 14 5 15 9Z" fill="#70ba61" /><path d="M2 9L8 13" stroke="#e4bf46" strokeWidth="2" /><circle cx="11.500" cy="11" r="4.400" fill="#d84228" /><path d="M9.800 9.300L13.200 12.700M13.200 9.300L9.800 12.700" stroke="#fff" strokeWidth="1.300" /></Ico></Cell>
        <Cell w="w-[18px]"><Ico><path d="M1 5.500h4V3h6v2.500h4v8H1Z" fill="#313941" stroke="#151b22" /><path d="M2 7h3v3H2Z" fill="#ddd" /><circle cx="11" cy="10" r="3.800" fill="#c3cbd0" stroke="#59636d" /><circle cx="11" cy="10" r="1.600" fill="#6c7b87" /></Ico></Cell>
        <Cell w="w-[18px]"><Ico><rect x="2" y="1" width="13" height="9" fill="#9aa4a6" stroke="#30343a" strokeWidth="1.300" /><path d="M3 9L14 2V9Z" fill="#646f73" /><path d="M1 12h14M2 14.500h12" stroke="#cfd2ca" strokeWidth="2" /></Ico></Cell>
        <span className="pt-px pl-[6px] text-[11px] tracking-[-0.100px] whitespace-nowrap">10:43 AM</span>
      </div>
    </div>
  );
}

export default function App() {
  return (
    <div className="flex h-[768px] w-[1024px] overflow-hidden bg-black font-['DejaVu_Sans_Condensed','DejaVu_Sans',sans-serif] text-[11px] text-[#1a1a1a] [font-stretch:condensed]">
      <div className="flex h-[765px] w-[1019px] flex-col overflow-hidden">
        <div className="flex h-[23px] shrink-0 items-center bg-linear-to-b from-[#0a5eea] via-[#0451d6] to-[#0361f2]">
          <div className="-ml-[5px] w-[20px]"><PptIcon /></div>
          <span className="text-[12.500px] font-bold tracking-[-0.350px] whitespace-nowrap text-[#dce6f5] [text-shadow:1px_1px_0_#0a3490]">Microsoft PowerPoint - [MDMmtgSeries4Agnes.ppt]</span>
          <div className="flex-1" />
          <div className="flex gap-[3px] self-start pr-[3px]">
            {["M5 14.500h7", "M8 9V5.500h7V12h-3M5.500 9.500h6v5h-6Z", "M5.500 5.500L15 15M15 5.500L5.500 15"].map((d, i) => (
              <svg key={i} width="20" height="20" viewBox="0 0 20 20">
                <rect x="0.500" y="0.500" width="19" height="19" rx="2.500" fill={i === 2 ? "#dc5434" : "#2e65df"} stroke="#c6d8f5" />
                <path d={d} fill="none" stroke="#eef4fc" strokeWidth={i === 0 ? 3 : i === 1 ? 1.4 : 2.4} />
              </svg>
            ))}
          </div>
        </div>
        <MenuBar />
        <Toolbar />
        <div className="flex h-[613px] shrink-0">
          <SidePane />
          <div className="flex flex-1 flex-col">
            <div className="flex h-[570px]">
              <FloorPlan />
              <SlideScroll />
            </div>
            <div className="h-[6px] border-t border-b border-t-[#eaf0f4] border-b-[#6987b8] bg-[#c3d6ea]" />
            <div className="flex h-[37px] border-l border-[#6987b8] bg-[#edefeb]">
              <span className="flex-1 pt-[3px] pl-[2px] text-[12px] tracking-[0.200px]">Click to add notes</span>
              <div className="flex w-[15px] flex-col justify-between bg-[#eeeee8]">
                <Chevron dir="up" off />
                <Chevron dir="down" off />
              </div>
            </div>
          </div>
        </div>
        <DrawBar />
        <div className="flex h-[23px] shrink-0 items-center gap-[5px] border-t border-[#777b77] bg-[#dbd9c5]">
          <Status w="w-[242px]" text="Slide 4 of 6" pad="pr-[6px]" />
          <Status w="w-[246px]" text="Default Design" pad="pr-px" />
          <Status w="w-[177px]" text="English (U.S.)" pad="pr-px" />
          <Status w="w-[31px]" text="" pad="" />
        </div>
        <TaskBar />
      </div>
    </div>
  );
}
